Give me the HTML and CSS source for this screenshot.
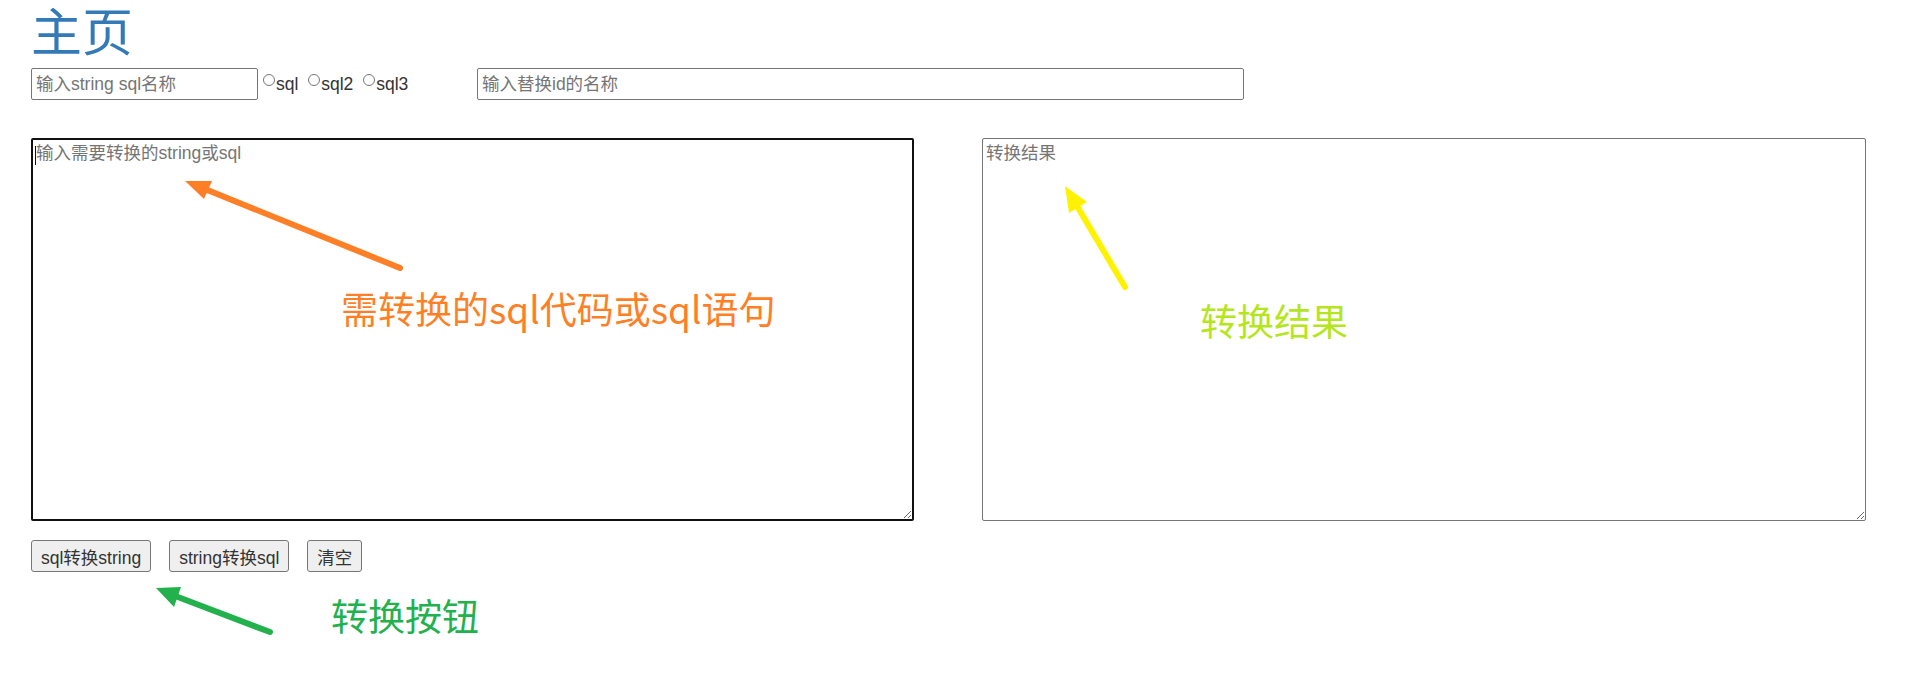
FILE: index.html
```html
<!DOCTYPE html>
<html lang="zh-CN">
<head>
<meta charset="utf-8">
<title>主页</title>
<link rel="stylesheet" href="styles.css">
</head>
<body>
<div class="page">
  <h1 class="title">主页</h1>
  <div class="opts">
    <input class="name-input" type="text" placeholder="输入string sql名称"><div class="radios"><input type="radio" name="t" class="radio"><span>sql</span> <input type="radio" name="t" class="radio"><span>sql2</span> <input type="radio" name="t" class="radio"><span>sql3</span></div><input class="id-input" type="text" placeholder="输入替换id的名称">
  </div>
  <div class="areas">
    <textarea class="area area-src" placeholder="输入需要转换的string或sql"></textarea>
    <textarea class="area area-out" placeholder="转换结果"></textarea>
  </div>
  <div class="buttons">
    <button class="btn">sql转换string</button>
    <button class="btn">string转换sql</button>
    <button class="btn">清空</button>
  </div>

  <div class="notes">
    <span class="caret"></span>
    <svg class="arrows" width="1911" height="676" viewBox="0 0 1911 676">
      <line x1="400" y1="268" x2="200" y2="187" stroke="#ff7f27" stroke-width="6" stroke-linecap="round"/>
      <polygon points="185,181 212,181 204,199" fill="#ff7f27"/>
      <line x1="1125" y1="287" x2="1074" y2="201" stroke="#fff200" stroke-width="6" stroke-linecap="round"/>
      <polygon points="1065,186 1087,202 1069,213" fill="#fff200"/>
      <line x1="270" y1="632" x2="170" y2="594" stroke="#22b14c" stroke-width="6" stroke-linecap="round"/>
      <polygon points="156,588 181,587 174,607" fill="#22b14c"/>
    </svg>
    <span class="note note-src">需转换的sql代码或sql语句</span>
    <span class="note note-out">转换结果</span>
    <span class="note note-btn">转换按钮</span>
  </div>
</div>
</body>
</html>
```

FILE: styles.css
```css
html, body {
  margin: 0;
  padding: 0;
  background: #fff;
}

body {
  font-family: "Liberation Sans", Arial, "Noto Sans CJK SC", sans-serif;
  font-size: 17.5px;
  color: #333;
}

.page {
  position: relative;
  width: 1911px;
  height: 676px;
  box-sizing: border-box;
  padding: 0 0 0 31px;
}

.title {
  margin: 0;
  font-family: "Noto Sans CJK SC", sans-serif;
  font-weight: 400;
  font-size: 51px;
  line-height: 58px;
  color: #337ab7;
}

.opts {
  display: flex;
  align-items: flex-start;
  margin-top: 10px;
  height: 32px;
}

.name-input,
.id-input {
  box-sizing: border-box;
  height: 32px;
  border: 1px solid #767676;
  border-radius: 2px;
  padding: 0 4px;
  font-family: "Liberation Sans", Arial, "Noto Sans CJK SC", sans-serif;
  font-size: 17.5px;
  color: #333;
  background: #fff;
}

.name-input { width: 227px; }
.id-input { width: 767px; }

.name-input::placeholder,
.id-input::placeholder,
.area::placeholder {
  color: #757575;
}

.radios {
  width: 219px;
  font-size: 17.5px;
  line-height: 20px;
  padding-top: 6px;
  white-space: nowrap;
}

.radio {
  width: 12px;
  height: 12px;
  margin: 0 1px 0 5px;
  vertical-align: 4px;
}

.areas {
  display: flex;
  gap: 68px;
  margin-top: 38px;
}

.area {
  box-sizing: border-box;
  width: 884px;
  height: 383px;
  margin: 0;
  padding: 4px 3px;
  border: 1px solid #767676;
  border-radius: 2px;
  font-family: "Liberation Sans", Arial, "Noto Sans CJK SC", sans-serif;
  font-size: 17.5px;
  line-height: 21px;
  color: #333;
  resize: both;
}

.area-src {
  width: 883px;
  border: 2px solid #101010;
  padding: 3px 3px;
  outline: none;
}

.buttons {
  display: flex;
  gap: 18px;
  margin-top: 19px;
}

.btn {
  box-sizing: border-box;
  height: 32px;
  padding: 0 9px;
  border: 1px solid #767676;
  border-radius: 3px;
  background: #efefef;
  font-family: "Liberation Sans", Arial, "Noto Sans CJK SC", sans-serif;
  font-size: 17.5px;
  color: #333;
}

.notes {
  position: absolute;
  inset: 0;
  pointer-events: none;
}

.caret {
  position: absolute;
  left: 35px;
  top: 146px;
  width: 1px;
  height: 19px;
  background: #111;
}

.arrows {
  position: absolute;
  left: 0;
  top: 0;
}

.note {
  position: absolute;
  font-family: "Noto Sans CJK SC", sans-serif;
  font-size: 37px;
  line-height: 37px;
  white-space: nowrap;
}

.note-src { left: 341px; top: 290px; color: #ff7f27; }
.note-out { left: 1200px; top: 302px; color: #b5e61d; }
.note-btn { left: 331px; top: 597px; color: #22b14c; }
```
